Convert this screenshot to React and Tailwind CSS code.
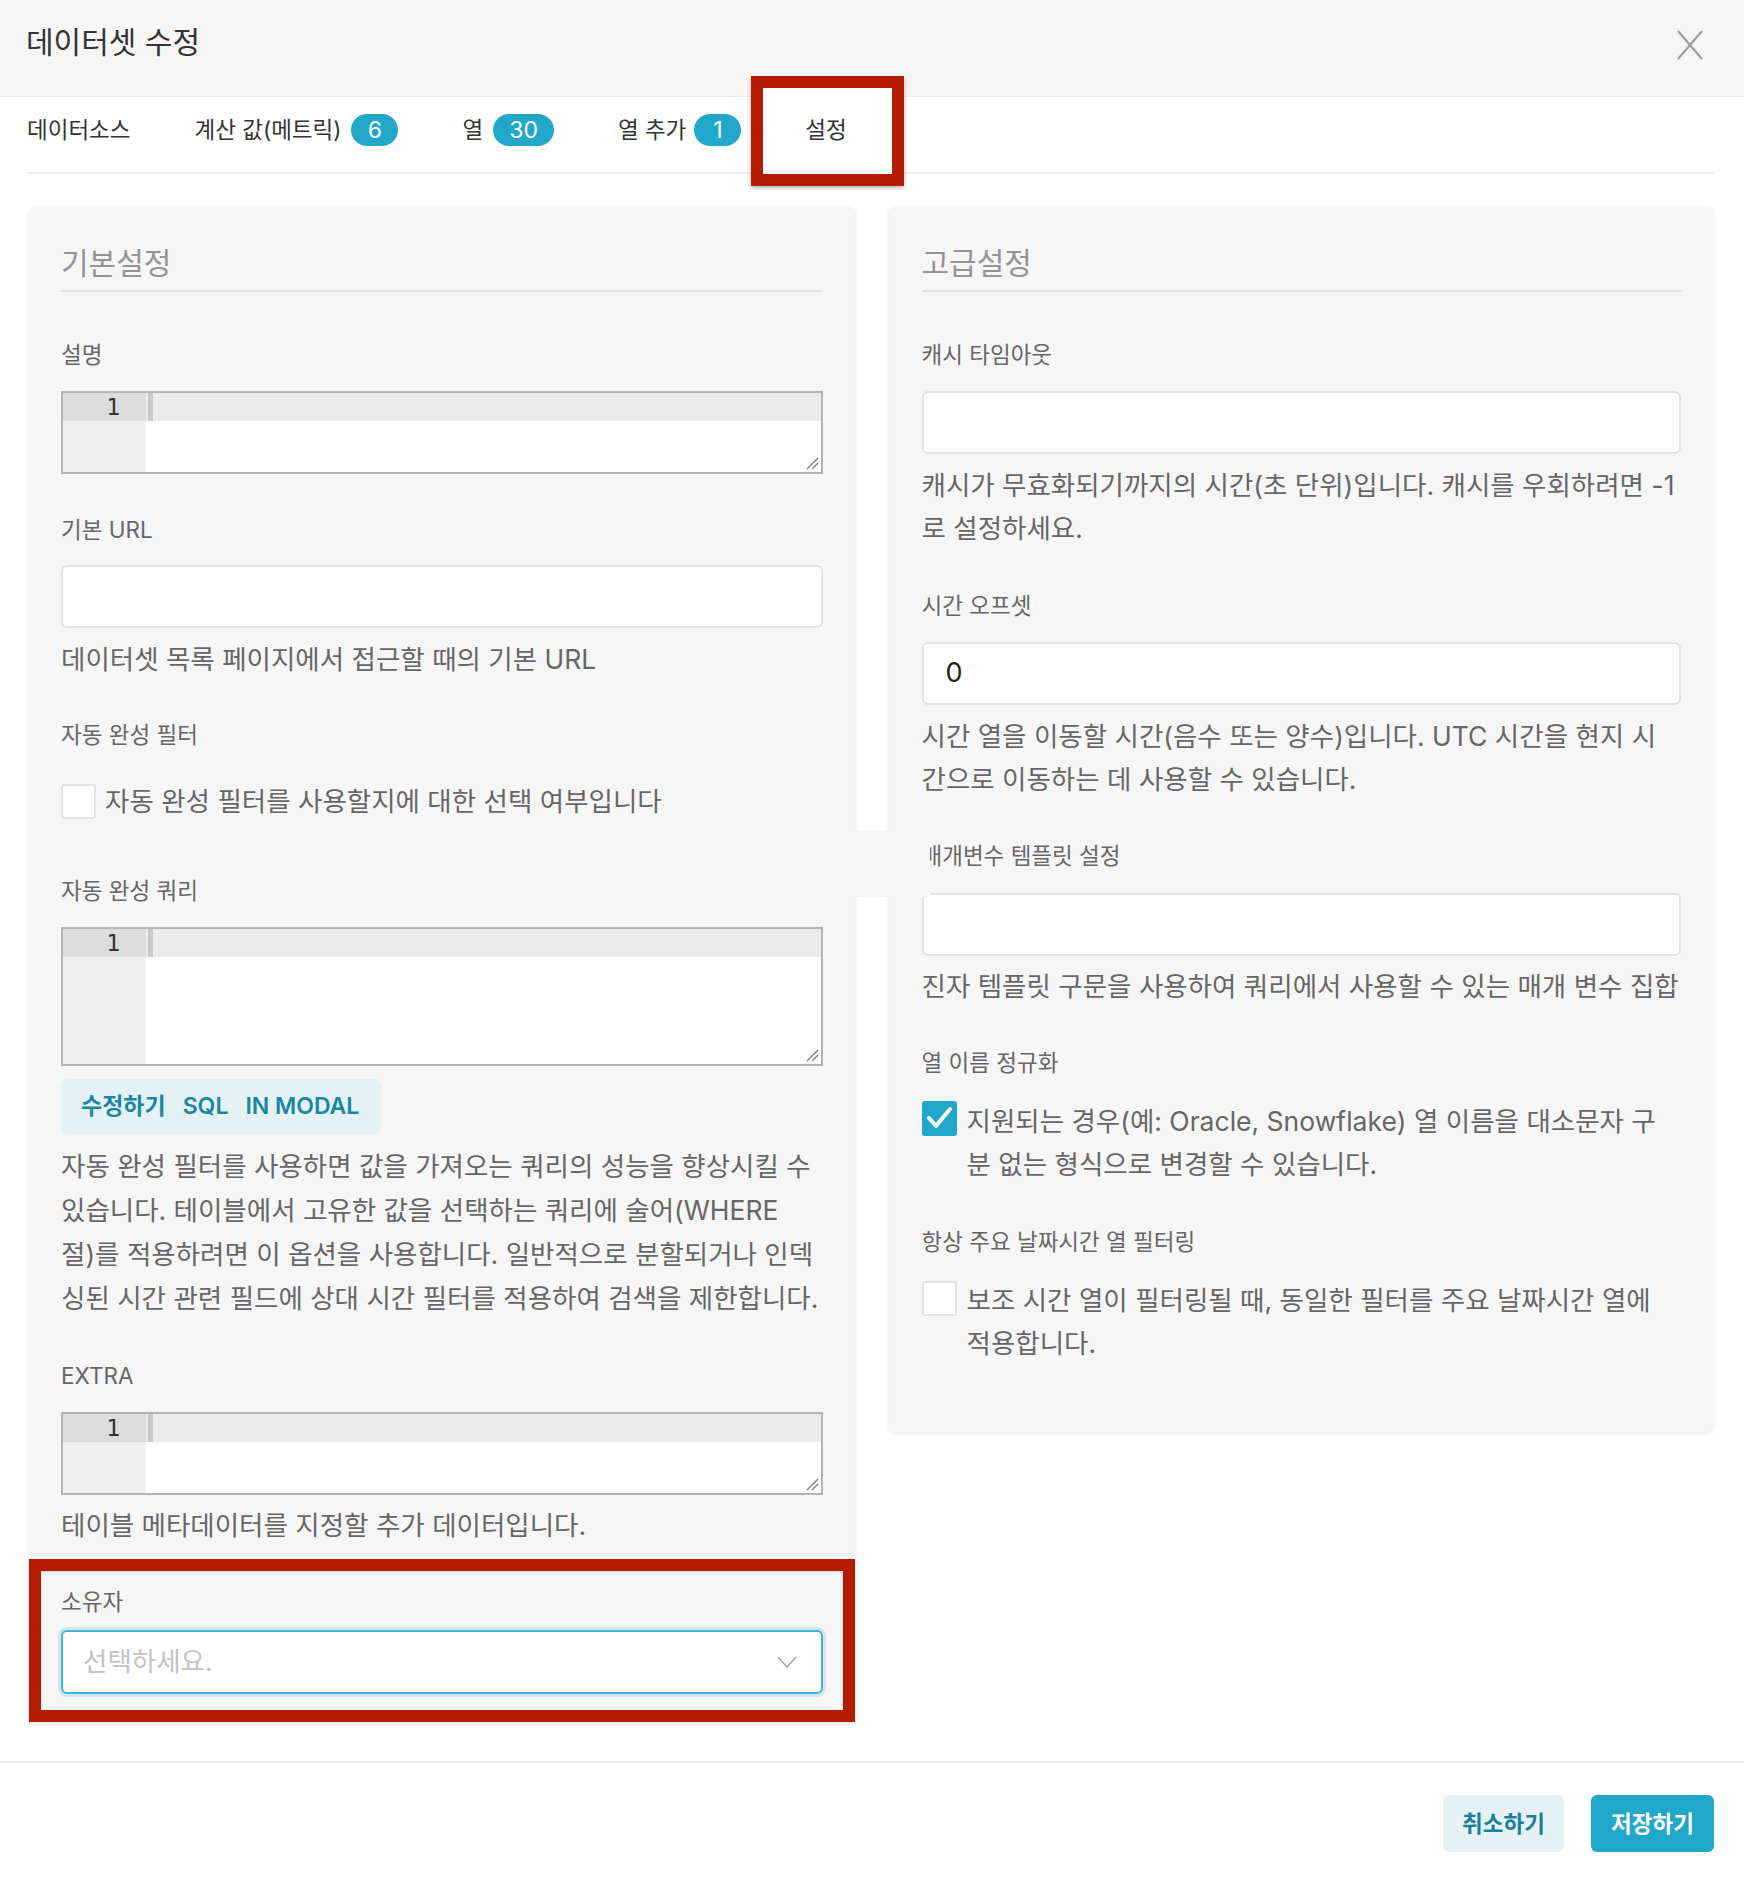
import React from 'react'

const FONT = "font-['Inter','Noto_Sans_CJK_KR',sans-serif]"

function CloseIcon() {
  return (
    <svg width="28" height="32" viewBox="0 0 28 32" fill="none">
      <line x1="2" y1="2" x2="26" y2="30" stroke="#9a9a9a" strokeWidth="2" />
      <line x1="26" y1="2" x2="2" y2="30" stroke="#9a9a9a" strokeWidth="2" />
    </svg>
  )
}

function Badge({ children }) {
  return (
    <span className="flex h-[32px] min-w-[47px] items-center justify-center rounded-full bg-[#20a7c9] px-[16px] text-[23px] leading-none text-white">
      {children}
    </span>
  )
}

function CodeBox({ className }) {
  return (
    <div className={`relative flex border-2 border-[#b4b4b4] bg-white ${className}`}>
      <div className="flex w-[83px] flex-col bg-[#efefef]">
        <div className="h-[28px] bg-[#dcdcdc] pr-[26px] text-right font-['DejaVu_Sans_Mono',monospace] text-[23px] leading-[28px] text-[#333]">
          1
        </div>
      </div>
      <div className="flex flex-1 flex-col">
        <div className="flex h-[28px] bg-[#ebebeb]">
          <div className="ml-[2px] w-[5px] bg-[#c8c8c8]" />
        </div>
      </div>
      <svg className="absolute bottom-[2px] right-[2px]" width="13" height="13" viewBox="0 0 13 13">
        <line x1="12" y1="1" x2="1" y2="12" stroke="#777" strokeWidth="1.3" />
        <line x1="12" y1="6" x2="6" y2="12" stroke="#777" strokeWidth="1.3" />
      </svg>
    </div>
  )
}

function Label({ className = '', children }) {
  return <div className={`text-[22.5px] leading-[30px] text-[#666] ${className}`}>{children}</div>
}

function Desc({ className = '', lines }) {
  return (
    <div className={`text-[26.5px] leading-[43px] text-[#666] ${className}`}>
      {lines.map((l) => (
        <div key={l} className="whitespace-nowrap">{l}</div>
      ))}
    </div>
  )
}

function Input({ className = '', children }) {
  return (
    <div className={`flex h-[63px] items-center rounded-[6px] border-2 border-[#e2e2e2] bg-white pl-[22px] text-[27px] text-[#222] ${className}`}>
      {children}
    </div>
  )
}

function Checkbox({ checked, className = '' }) {
  if (checked) {
    return (
      <span className={`flex h-[35px] w-[35px] shrink-0 items-center justify-center rounded-[3px] bg-[#20a7c9] ${className}`}>
        <svg width="35" height="35" viewBox="0 0 35 35" fill="none">
          <polyline points="7,17 14,25 28,8" stroke="white" strokeWidth="4" strokeLinecap="round" strokeLinejoin="round" />
        </svg>
      </span>
    )
  }
  return <span className={`h-[35px] w-[35px] shrink-0 rounded-[3px] border-2 border-[#e2e2e2] bg-white ${className}`} />
}

function PanelTitle({ children }) {
  return (
    <div className="border-b-2 border-[#e0e0e0] pb-[6px] text-[30px] leading-[41px] text-[#949494]">
      {children}
    </div>
  )
}

export default function App() {
  return (
    <div className={`min-h-[1886px] w-[1744px] bg-white ${FONT}`}>
      {/* Header */}
      <div className="flex h-[97px] items-start justify-between border-b border-[#ececec] bg-[#f6f6f6] pl-[26px] pr-[40px]">
        <div className="pt-[22px] text-[30px] leading-[41px] text-[#333]">데이터셋 수정</div>
        <div className="pt-[29px]">
          <CloseIcon />
        </div>
      </div>

      {/* Tabs */}
      <div className="flex h-[75px] items-start gap-[64px] pl-[27px] pt-[17px] text-[22.5px] text-[#333]">
        <div className="flex h-[32px] items-center">데이터소스</div>
        <div className="flex h-[32px] items-center gap-[10px]">
          계산 값(메트릭) <Badge>6</Badge>
        </div>
        <div className="flex h-[32px] items-center gap-[10px]">
          열 <Badge>30</Badge>
        </div>
        <div className="flex h-[32px] items-center gap-[8px]">
          열 추가 <Badge>1</Badge>
        </div>
        <div className="relative flex h-[32px] items-center">
          <div className="absolute -bottom-[40px] -left-[54px] -right-[57px] -top-[38px] border-[12px] border-[#b41c02] bg-white shadow-[0_2px_4px_rgba(0,0,0,0.3)]" />
          <span className="relative">설정</span>
        </div>
      </div>
      <div className="ml-[27px] mr-[30px] h-[2px] bg-[#eeeeee]" />

      {/* Panels */}
      <div className="relative mt-[33px] grid grid-cols-2 items-start gap-[34px] pl-[29px] pr-[30px]">
        {/* Left panel */}
        <div className="flex flex-col rounded-[6px] bg-[#f6f6f6] px-[32px] pt-[36px] shadow-[0_1px_4px_rgba(0,0,0,0.1)]">
          <PanelTitle>기본설정</PanelTitle>
          <Label className="mt-[48px]">설명</Label>
          <CodeBox className="mt-[21px] h-[83px]" />
          <Label className="mt-[41px]">기본 URL</Label>
          <Input className="mt-[20px]" />
          <Desc className="mt-[10px]" lines={['데이터셋 목록 페이지에서 접근할 때의 기본 URL']} />
          <Label className="mt-[39px]">자동 완성 필터</Label>
          <div className="mt-[30px] flex h-[43px] items-center gap-[9px]">
            <Checkbox />
            <span className="text-[26.5px] text-[#666]">자동 완성 필터를 사용할지에 대한 선택 여부입니다</span>
          </div>
          <Label className="mt-[53px]">자동 완성 쿼리</Label>
          <CodeBox className="mt-[21px] h-[139px]" />
          <button className="mt-[13px] flex h-[55px] w-[320px] items-center gap-[17px] rounded-[6px] bg-[#e4f2f6] pl-[20px] text-[23px] font-semibold text-[#1b86a2]">
            <span>수정하기</span>
            <span>SQL</span>
            <span>IN MODAL</span>
          </button>
          <Desc
            className="mt-[10px] leading-[44px]"
            lines={[
              '자동 완성 필터를 사용하면 값을 가져오는 쿼리의 성능을 향상시킬 수',
              '있습니다. 테이블에서 고유한 값을 선택하는 쿼리에 술어(WHERE',
              '절)를 적용하려면 이 옵션을 사용합니다. 일반적으로 분할되거나 인덱',
              '싱된 시간 관련 필드에 상대 시간 필터를 적용하여 검색을 제한합니다.',
            ]}
          />
          <Label className="mt-[41px]">EXTRA</Label>
          <CodeBox className="mt-[21px] h-[83px]" />
          <Desc className="mt-[9px]" lines={['테이블 메타데이터를 지정할 추가 데이터입니다.']} />
          {/* Owner (highlighted) */}
          <div className="-mx-[32px] mt-[12px] border-[12px] border-[#b41c02] bg-[#f6f6f6] px-[20px] pb-[16px] pt-[16px] shadow-[inset_0_1px_3px_rgba(0,0,0,0.15)]">
            <Label>소유자</Label>
            <div className="mt-[13px] flex h-[64px] items-center justify-between rounded-[6px] border-2 border-[#3fb6d3] bg-white pl-[20px] pr-[24px] shadow-[0_0_0_3px_rgba(32,167,201,0.18)]">
              <span className="text-[26.5px] text-[#c2c2c2]">선택하세요.</span>
              <svg width="20" height="12" viewBox="0 0 20 12" fill="none">
                <polyline points="1,1 10,11 19,1" stroke="#a8a8a8" strokeWidth="1.6" />
              </svg>
            </div>
          </div>
        </div>

        {/* Right panel */}
        <div className="flex flex-col rounded-[6px] bg-[#f6f6f6] px-[33px] pb-[67px] pt-[36px] shadow-[0_1px_4px_rgba(0,0,0,0.1)]">
          <PanelTitle>고급설정</PanelTitle>
          <Label className="mt-[48px]">캐시 타임아웃</Label>
          <Input className="mt-[21px] h-[62px]" />
          <Desc
            className="mt-[10px]"
            lines={['캐시가 무효화되기까지의 시간(초 단위)입니다. 캐시를 우회하려면 -1', '로 설정하세요.']}
          />
          <Label className="mt-[41px]">시간 오프셋</Label>
          <Input className="mt-[21px]">0</Input>
          <Desc
            className="mt-[10px]"
            lines={['시간 열을 이동할 시간(음수 또는 양수)입니다. UTC 시간을 현지 시', '간으로 이동하는 데 사용할 수 있습니다.']}
          />
          <Label className="mt-[40px]">매개변수 템플릿 설정</Label>
          <Input className="mt-[22px]" />
          <Desc className="mt-[9px]" lines={['진자 템플릿 구문을 사용하여 쿼리에서 사용할 수 있는 매개 변수 집합']} />
          <Label className="mt-[40px]">열 이름 정규화</Label>
          <div className="mt-[22px] flex items-start gap-[10px]">
            <Checkbox checked className="mt-[1px]" />
            <Desc
              lines={['지원되는 경우(예: Oracle, Snowflake) 열 이름을 대소문자 구', '분 없는 형식으로 변경할 수 있습니다.']}
            />
          </div>
          <Label className="mt-[41px]">항상 주요 날짜시간 열 필터링</Label>
          <div className="mt-[22px] flex items-start gap-[10px]">
            <Checkbox className="mt-[2px]" />
            <Desc lines={['보조 시간 열이 필터링될 때, 동일한 필터를 주요 날짜시간 열에', '적용합니다.']} />
          </div>
        </div>

        {/* stray patch from the original capture */}
        <div className="absolute left-[853px] top-[623px] h-[67px] w-[77px] bg-[#f6f6f6]" />
      </div>

      {/* Footer */}
      <div className="mt-[39px] h-[2px] bg-[#e8e8e8]" />
      <div className="mt-[32px] flex justify-end gap-[27px] pb-[34px] pr-[30px]">
        <button className="h-[57px] w-[121px] rounded-[6px] bg-[#e4f2f6] text-[22.5px] font-semibold text-[#1b7f99]">
          취소하기
        </button>
        <button className="h-[57px] w-[123px] rounded-[6px] bg-[#20a7c9] text-[22.5px] font-semibold text-white">
          저장하기
        </button>
      </div>
    </div>
  )
}
